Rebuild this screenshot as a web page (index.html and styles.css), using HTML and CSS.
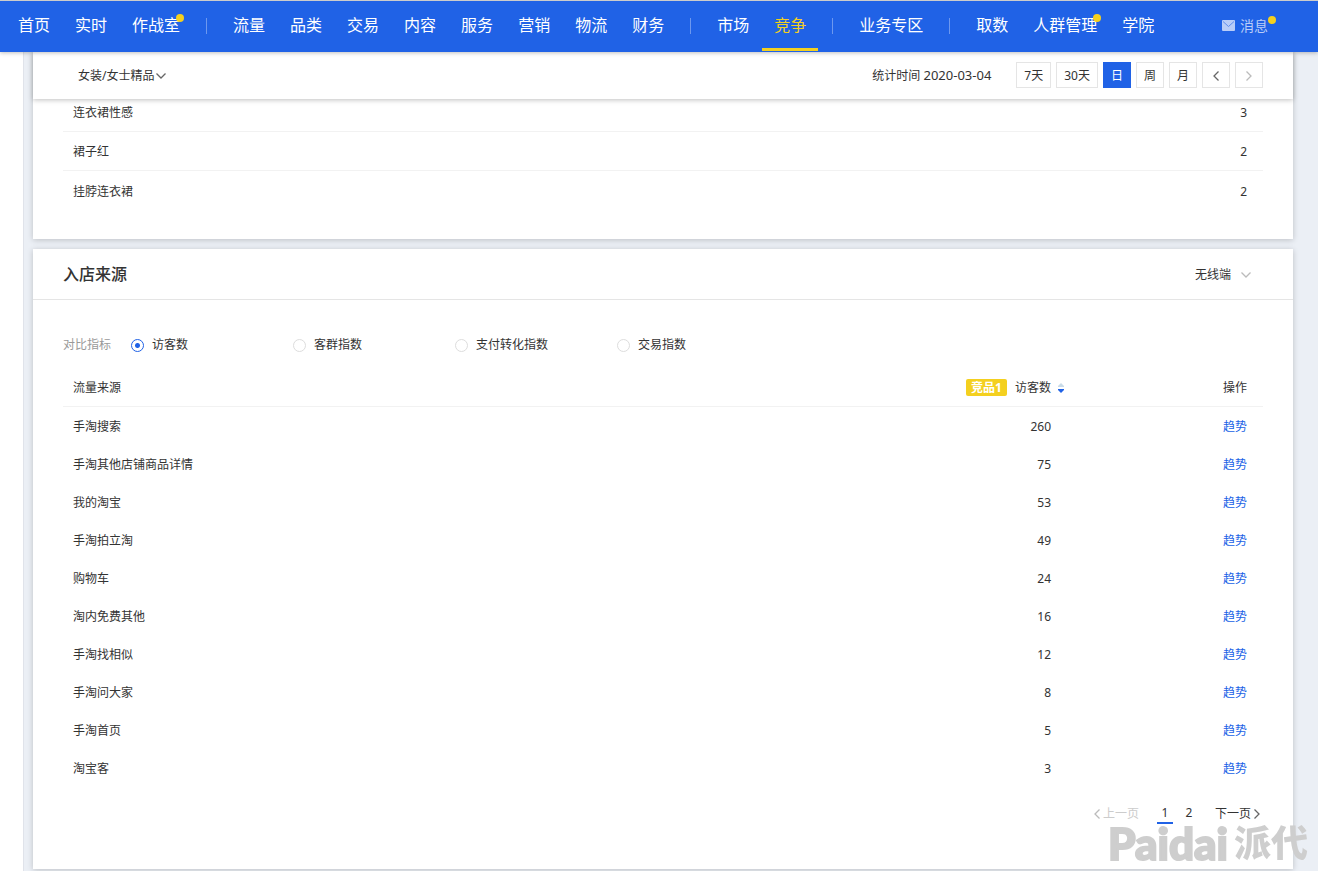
FILE: index.html
```html
<!DOCTYPE html>
<html lang="zh-CN">
<head>
  <meta charset="UTF-8" />
  <meta name="viewport" content="width=device-width, initial-scale=1" />
  <title>竞争 - 入店来源</title>
  <link rel="stylesheet" href="styles.css">
</head>
<body>
  <header class="topbar">
    <nav class="nav">
      <div class="nav-group">
        <a href="#">首页</a>
        <a href="#">实时</a>
        <a href="#"><span class="has-dot">作战室</span></a>
      </div>
      <div class="nav-group">
        <a href="#">流量</a>
        <a href="#">品类</a>
        <a href="#">交易</a>
        <a href="#">内容</a>
        <a href="#">服务</a>
        <a href="#">营销</a>
        <a href="#">物流</a>
        <a href="#">财务</a>
      </div>
      <div class="nav-group">
        <a href="#">市场</a>
        <a href="#" class="active">竞争</a>
      </div>
      <div class="nav-group">
        <a href="#">业务专区</a>
      </div>
      <div class="nav-group">
        <a href="#">取数</a>
        <a href="#"><span class="has-dot">人群管理</span></a>
        <a href="#">学院</a>
      </div>
    </nav>
    <a href="#" class="message">
      <svg width="13" height="11" viewBox="0 0 13 11">
        <rect width="13" height="11" rx="1" fill="#b9cdf8" />
        <path d="M1 1.5l5.5 5 5.5-5" fill="none" stroke="#5f8eee" />
      </svg>
      <span class="has-dot">消息</span>
    </a>
  </header>

  <main class="main">
    <section class="card">
      <div class="filter-bar">
        <div class="dropdown">
          <select aria-label="类目">
            <option>女装/女士精品</option>
          </select>
          <svg width="10" height="6" viewBox="0 0 10 6"><path d="M.5.5L5 5 9.5.5" /></svg>
        </div>
        <div class="date">
          <span class="date-label">统计时间 <time>2020-03-04</time></span>
          <button type="button">7天</button>
          <button type="button">30天</button>
          <button type="button" class="selected">日</button>
          <button type="button">周</button>
          <button type="button">月</button>
          <button type="button" aria-label="前一天">
            <svg width="6" height="10" viewBox="0 0 6 10"><path d="M5.5.5L1 5l4.5 4.5" /></svg>
          </button>
          <button type="button" aria-label="后一天" disabled>
            <svg width="6" height="10" viewBox="0 0 6 10"><path d="M.5.5L5 5 .5 9.5" /></svg>
          </button>
        </div>
      </div>
      <div class="keywords">
        <table>
          <tr><td>连衣裙性感</td><td class="num">3</td></tr>
          <tr><td>裙子红</td><td class="num">2</td></tr>
          <tr><td>挂脖连衣裙</td><td class="num">2</td></tr>
        </table>
      </div>
    </section>

    <section class="card">
      <div class="card-head">
        <h2>入店来源</h2>
        <div class="dropdown terminal">
          <select aria-label="终端">
            <option>无线端</option>
          </select>
          <svg width="10" height="6" viewBox="0 0 10 6"><path d="M.5.5L5 5 9.5.5" /></svg>
        </div>
      </div>
      <div class="card-body">
        <div class="metrics">
          <span class="metrics-label">对比指标</span>
          <label><input type="radio" name="metric" checked />访客数</label>
          <label><input type="radio" name="metric" />客群指数</label>
          <label><input type="radio" name="metric" />支付转化指数</label>
          <label><input type="radio" name="metric" />交易指数</label>
        </div>

        <table class="source">
          <thead>
            <tr>
              <th>流量来源</th>
              <th class="visitors">
                <span class="tag">竞品1</span>访客数
                <svg class="sort" width="8" height="10" viewBox="0 0 8 10">
                  <path d="M1 4h6V3L4 0 1 3z" fill="#c9dbe8" />
                  <path d="M1 6h6v1L4 10 1 7z" fill="#2062e6" />
                </svg>
              </th>
              <th class="action">操作</th>
            </tr>
          </thead>
          <tbody>
            <tr><td>手淘搜索</td><td class="visitors">260</td><td class="action"><a href="#">趋势</a></td></tr>
            <tr><td>手淘其他店铺商品详情</td><td class="visitors">75</td><td class="action"><a href="#">趋势</a></td></tr>
            <tr><td>我的淘宝</td><td class="visitors">53</td><td class="action"><a href="#">趋势</a></td></tr>
            <tr><td>手淘拍立淘</td><td class="visitors">49</td><td class="action"><a href="#">趋势</a></td></tr>
            <tr><td>购物车</td><td class="visitors">24</td><td class="action"><a href="#">趋势</a></td></tr>
            <tr><td>淘内免费其他</td><td class="visitors">16</td><td class="action"><a href="#">趋势</a></td></tr>
            <tr><td>手淘找相似</td><td class="visitors">12</td><td class="action"><a href="#">趋势</a></td></tr>
            <tr><td>手淘问大家</td><td class="visitors">8</td><td class="action"><a href="#">趋势</a></td></tr>
            <tr><td>手淘首页</td><td class="visitors">5</td><td class="action"><a href="#">趋势</a></td></tr>
            <tr><td>淘宝客</td><td class="visitors">3</td><td class="action"><a href="#">趋势</a></td></tr>
          </tbody>
        </table>

        <div class="pager">
          <button type="button" class="prev" disabled>
            <svg width="6" height="10" viewBox="0 0 6 10"><path d="M5.5.5L1 5l4.5 4.5" /></svg>上一页
          </button>
          <a href="#" class="page current">1</a>
          <a href="#" class="page">2</a>
          <button type="button" class="next">
            下一页<svg width="6" height="10" viewBox="0 0 6 10"><path d="M.5.5L5 5 .5 9.5" /></svg>
          </button>
        </div>
      </div>
    </section>
  </main>

  <div class="watermark"><span class="latin">Paidai</span><span class="cjk">派代</span></div>
</body>
</html>
```
FILE: styles.css
```css
* {
  box-sizing: border-box;
}
body {
  margin: 0;
  min-height: 100vh;
  display: flex;
  flex-direction: column;
  background: #fff;
  color: #333;
  font-family: "Noto Sans", "Noto Sans CJK SC", sans-serif;
  font-size: 12px;
  line-height: 18px;
}
a {
  color: #2062e6;
  text-decoration: none;
}
button,
select {
  font: inherit;
  color: inherit;
  cursor: pointer;
}
button svg,
.dropdown svg {
  fill: none;
  stroke: #666;
  stroke-width: 1.3;
}
button:disabled {
  color: #ccc;
  cursor: default;
}
button:disabled svg {
  stroke: #bbb;
}

/* top navigation */
.topbar {
  position: relative;
  z-index: 3;
  display: flex;
  justify-content: space-between;
  height: 52px;
  padding: 0 50px 0 6px;
  border-top: 1px solid #ccc;
  background: #2062e6;
  box-shadow: 0 1px 4px rgba(0, 0, 0, 0.25);
}
.nav,
.nav-group {
  display: flex;
  white-space: nowrap;
}
.nav-group {
  gap: 1px;
}
.nav-group + .nav-group::before {
  content: "";
  width: 1px;
  height: 16px;
  margin: 17px 13px 0 14px;
  background: #6d98ef;
}
.nav a {
  padding: 0 12px;
  color: #fff;
  font-size: 16px;
  line-height: 48px;
}
.nav a.active {
  height: 50px;
  color: #f4d01f;
  border-bottom: 3px solid #f4d01f;
}
.has-dot {
  position: relative;
}
.has-dot::after {
  content: "";
  position: absolute;
  top: 0;
  right: -4px;
  width: 8px;
  height: 8px;
  border-radius: 50%;
  background: #f4d01f;
}
.message {
  display: flex;
  align-items: center;
  gap: 5px;
  height: 49px;
  color: #b9cdf8;
  font-size: 14px;
}
.message .has-dot::after {
  top: -1px;
  right: -8px;
}

.main {
  flex: 1;
  margin-left: 23px;
  padding: 0 25px 2px 9px;
  border-left: 1px solid #e0e3ea;
  background: #ebeff5;
}
.card {
  background: #fff;
  box-shadow: 0 1px 6px rgba(0, 0, 0, 0.2);
}
.card + .card {
  margin-top: 10px;
}

/* filter bar */
.filter-bar {
  position: relative;
  z-index: 2;
  display: flex;
  align-items: center;
  justify-content: space-between;
  height: 47px;
  padding: 0 30px 1px 45px;
  background: #fff;
  box-shadow: 0 1px 5px rgba(0, 0, 0, 0.25);
}
.dropdown {
  position: relative;
  padding-top: 1px;
}
.dropdown select {
  appearance: none;
  padding: 0 12px 0 0;
  border: 0;
  background: none;
}
.dropdown svg {
  position: absolute;
  top: 7px;
  right: 1px;
  pointer-events: none;
}
.terminal select {
  padding-right: 20px;
}
.terminal svg {
  stroke: #bbb;
}
.date {
  display: flex;
  align-items: center;
  gap: 5px;
}
.date-label {
  margin-right: 20px;
}
.date-label time {
  font-size: 13px;
}
.date button {
  min-width: 28px;
  height: 26px;
  padding: 1px 7px 0;
  border: 1px solid #e5e5e5;
  background: #fff;
}
.date button svg {
  vertical-align: -1px;
}
.date .selected {
  border-color: #2062e6;
  background: #2062e6;
  color: #fff;
}

table {
  width: 100%;
  border-collapse: separate;
  border-spacing: 0;
}
th {
  font-weight: normal;
  text-align: left;
}
th,
td {
  height: 38px;
  padding: 2px 16px 0 10px;
}

/* the first row slides under the filter bar */
.keywords {
  margin-top: -6px;
  padding: 0 30px 29px;
}
.keywords td {
  height: 39px;
  border-bottom: 1px solid #f2f2f2;
}
.keywords tr:last-child td {
  border-bottom: 0;
}
.num {
  text-align: right;
}

/* traffic source */
.card-head {
  display: flex;
  align-items: center;
  justify-content: space-between;
  height: 51px;
  padding: 0 41px 0 30px;
  border-bottom: 1px solid #e5e5e5;
}
.card-head h2 {
  margin: 0;
  font-size: 16px;
  font-weight: 500;
  line-height: 24px;
}
.card-body {
  padding: 35px 30px 45px;
}
.metrics {
  display: flex;
  align-items: center;
  height: 20px;
  margin-bottom: 13px;
}
.metrics-label {
  width: 68px;
  color: #999;
}
.metrics label {
  display: flex;
  align-items: center;
  gap: 8px;
  min-width: 162px;
}
.metrics input {
  appearance: none;
  width: 13px;
  height: 13px;
  margin: 0;
  border: 1px solid #ddd;
  border-radius: 50%;
}
.metrics input:checked {
  border-color: #2062e6;
  background: radial-gradient(#2062e6 2px, #fff 3px);
}
.source th {
  height: 39px;
  border-bottom: 1px solid #f2f2f2;
}
.source .visitors {
  width: 200px;
  text-align: right;
}
.source th.visitors {
  padding-right: 2px;
}
.source .action {
  width: 196px;
  text-align: right;
}
.tag {
  display: inline-block;
  margin-right: 8px;
  padding: 0 5px;
  border-radius: 2px;
  background: #f4d01f;
  color: #fff;
  font-weight: bold;
  line-height: 17px;
}
.sort {
  margin-left: 3px;
  vertical-align: -1px;
}

.pager {
  display: flex;
  align-items: center;
  justify-content: flex-end;
  gap: 8px;
  margin-top: 17px;
  padding-right: 3px;
}
.pager button {
  display: flex;
  align-items: center;
  gap: 3px;
  padding: 0;
  border: 0;
  background: none;
}
.pager .prev {
  margin-right: 10px;
}
.pager .next {
  margin-left: 10px;
}
.page {
  width: 16px;
  border-bottom: 2px solid transparent;
  color: #333;
  text-align: center;
}
.page.current {
  border-color: #2062e6;
}

.watermark {
  position: fixed;
  right: 10px;
  bottom: 8px;
  z-index: 4;
  display: flex;
  align-items: center;
  gap: 6px;
  color: #cecece;
  line-height: 40px;
  pointer-events: none;
}
.latin {
  font-family: Lato, sans-serif;
  font-size: 44px;
  font-weight: 900;
  -webkit-text-stroke: 2px #cecece;
}
.cjk {
  font-size: 37px;
  font-weight: 900;
}
```
